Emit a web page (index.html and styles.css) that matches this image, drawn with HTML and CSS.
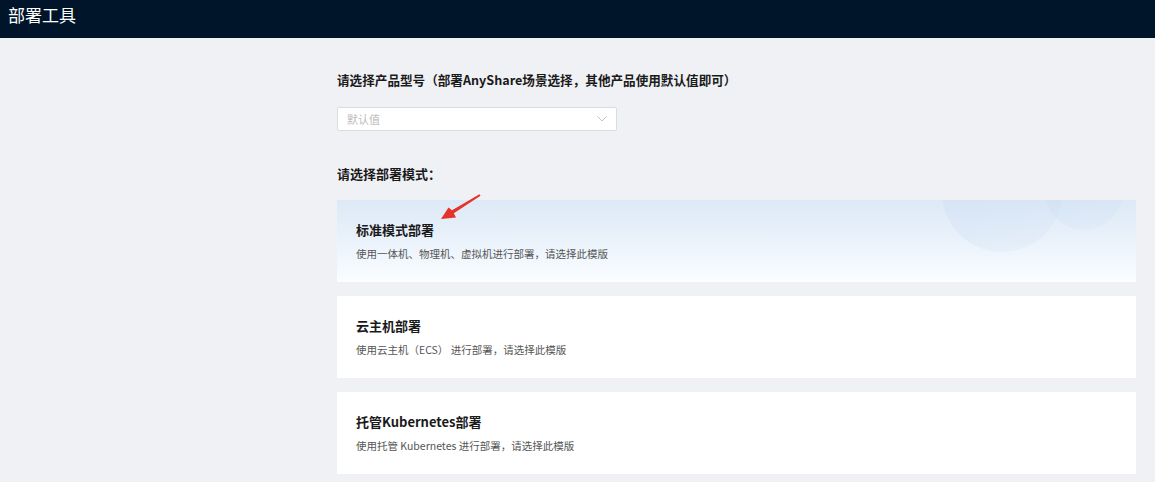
FILE: index.html
```html
<!DOCTYPE html>
<html lang="zh-CN">
<head>
  <meta charset="UTF-8" />
  <meta name="viewport" content="width=device-width, initial-scale=1.0"/>
  <title>部署工具</title>
  <link rel="stylesheet" href="styles.css">
</head>
<body>

  <header class="topbar">
    <h1>部署工具</h1>
  </header>

  <main class="deploy">
    <h2 class="deploy-titulo producto">请选择产品型号（部署AnyShare场景选择，其他产品使用默认值即可）</h2>
    <div class="select">
      <span class="select-valor">默认值</span>
      <svg class="select-flecha" width="10" height="6" viewBox="0 0 10 6">
        <path d="M0.5 0.5 L5 5 L9.5 0.5" fill="none" stroke="#c4c4c4" stroke-width="1"/>
      </svg>
    </div>

    <h2 class="deploy-titulo modo">请选择部署模式：</h2>
    <div class="modos">
      <div class="modo-card activo">
        <h3>标准模式部署</h3>
        <p>使用一体机、物理机、虚拟机进行部署，请选择此模版</p>
      </div>
      <div class="modo-card">
        <h3>云主机部署</h3>
        <p>使用云主机（ECS） 进行部署，请选择此模版</p>
      </div>
      <div class="modo-card">
        <h3>托管Kubernetes部署</h3>
        <p>使用托管 Kubernetes 进行部署，请选择此模版</p>
      </div>

      <!-- flecha de anotacion -->
      <svg class="flecha" width="50" height="32" viewBox="0 0 50 32">
        <polygon points="4,27 11.5,15.5 15,18.2 42.5,2.2 43.5,3.8 16.8,21.2 19,25.5" fill="#e5322b"/>
      </svg>
    </div>
  </main>

</body>
</html>
```

FILE: styles.css
```css
* {
  box-sizing: border-box;
  margin: 0;
  padding: 0;
}
body {
  font-family: "Noto Sans CJK SC", "Noto Sans", sans-serif;
  background: #f0f1f5;
  color: #1a1a1a;
  min-height: 100vh;
}

.topbar {
  height: 38px;
  background: #00152a;
  padding-left: 8px;
}
.topbar h1 {
  font-size: 17px;
  font-weight: 400;
  line-height: 30px;
  color: #fff;
}

.deploy {
  padding: 32px 19px 0 337px;
}

.deploy-titulo {
  font-size: 13px;
  font-weight: 700;
  line-height: 20px;
  color: #1a1a1a;
}
.deploy-titulo.producto {
  font-size: 12.6px;
}
.deploy-titulo.modo {
  margin-top: 33px;
}

.select {
  margin-top: 17px;
  width: 280px;
  height: 24px;
  background: #fff;
  border: 1px solid #dcdcdc;
  border-radius: 2px;
  display: flex;
  align-items: center;
  justify-content: space-between;
  padding: 0 9px;
}
.select-valor {
  font-size: 11px;
  color: #bdbdbd;
}

.modos {
  position: relative;
  margin-top: 16px;
  display: flex;
  flex-direction: column;
  gap: 14px;
}

.modo-card {
  position: relative;
  overflow: hidden;
  background: #fff;
  height: 82px;
  padding: 20px 19px;
  display: flex;
  flex-direction: column;
  gap: 6px;
}
.modo-card h3 {
  position: relative;
  font-size: 13px;
  font-weight: 700;
  line-height: 20px;
}
.modo-card p {
  position: relative;
  font-size: 10.5px;
  line-height: 16px;
  color: #555;
}

.modo-card.activo {
  background: linear-gradient(180deg, #dde9f6 0%, #eaf2fb 50%, #fbfdff 100%);
}
.modo-card.activo::before,
.modo-card.activo::after {
  content: "";
  position: absolute;
  border-radius: 50%;
  background: linear-gradient(160deg, rgba(196, 216, 240, 0.45), rgba(214, 228, 245, 0.25));
}
.modo-card.activo::before {
  width: 120px;
  height: 120px;
  left: 605px;
  top: -68px;
}
.modo-card.activo::after {
  width: 78px;
  height: 78px;
  left: 708px;
  top: -48px;
}

.flecha {
  position: absolute;
  left: 100px;
  top: -8px;
}
```
